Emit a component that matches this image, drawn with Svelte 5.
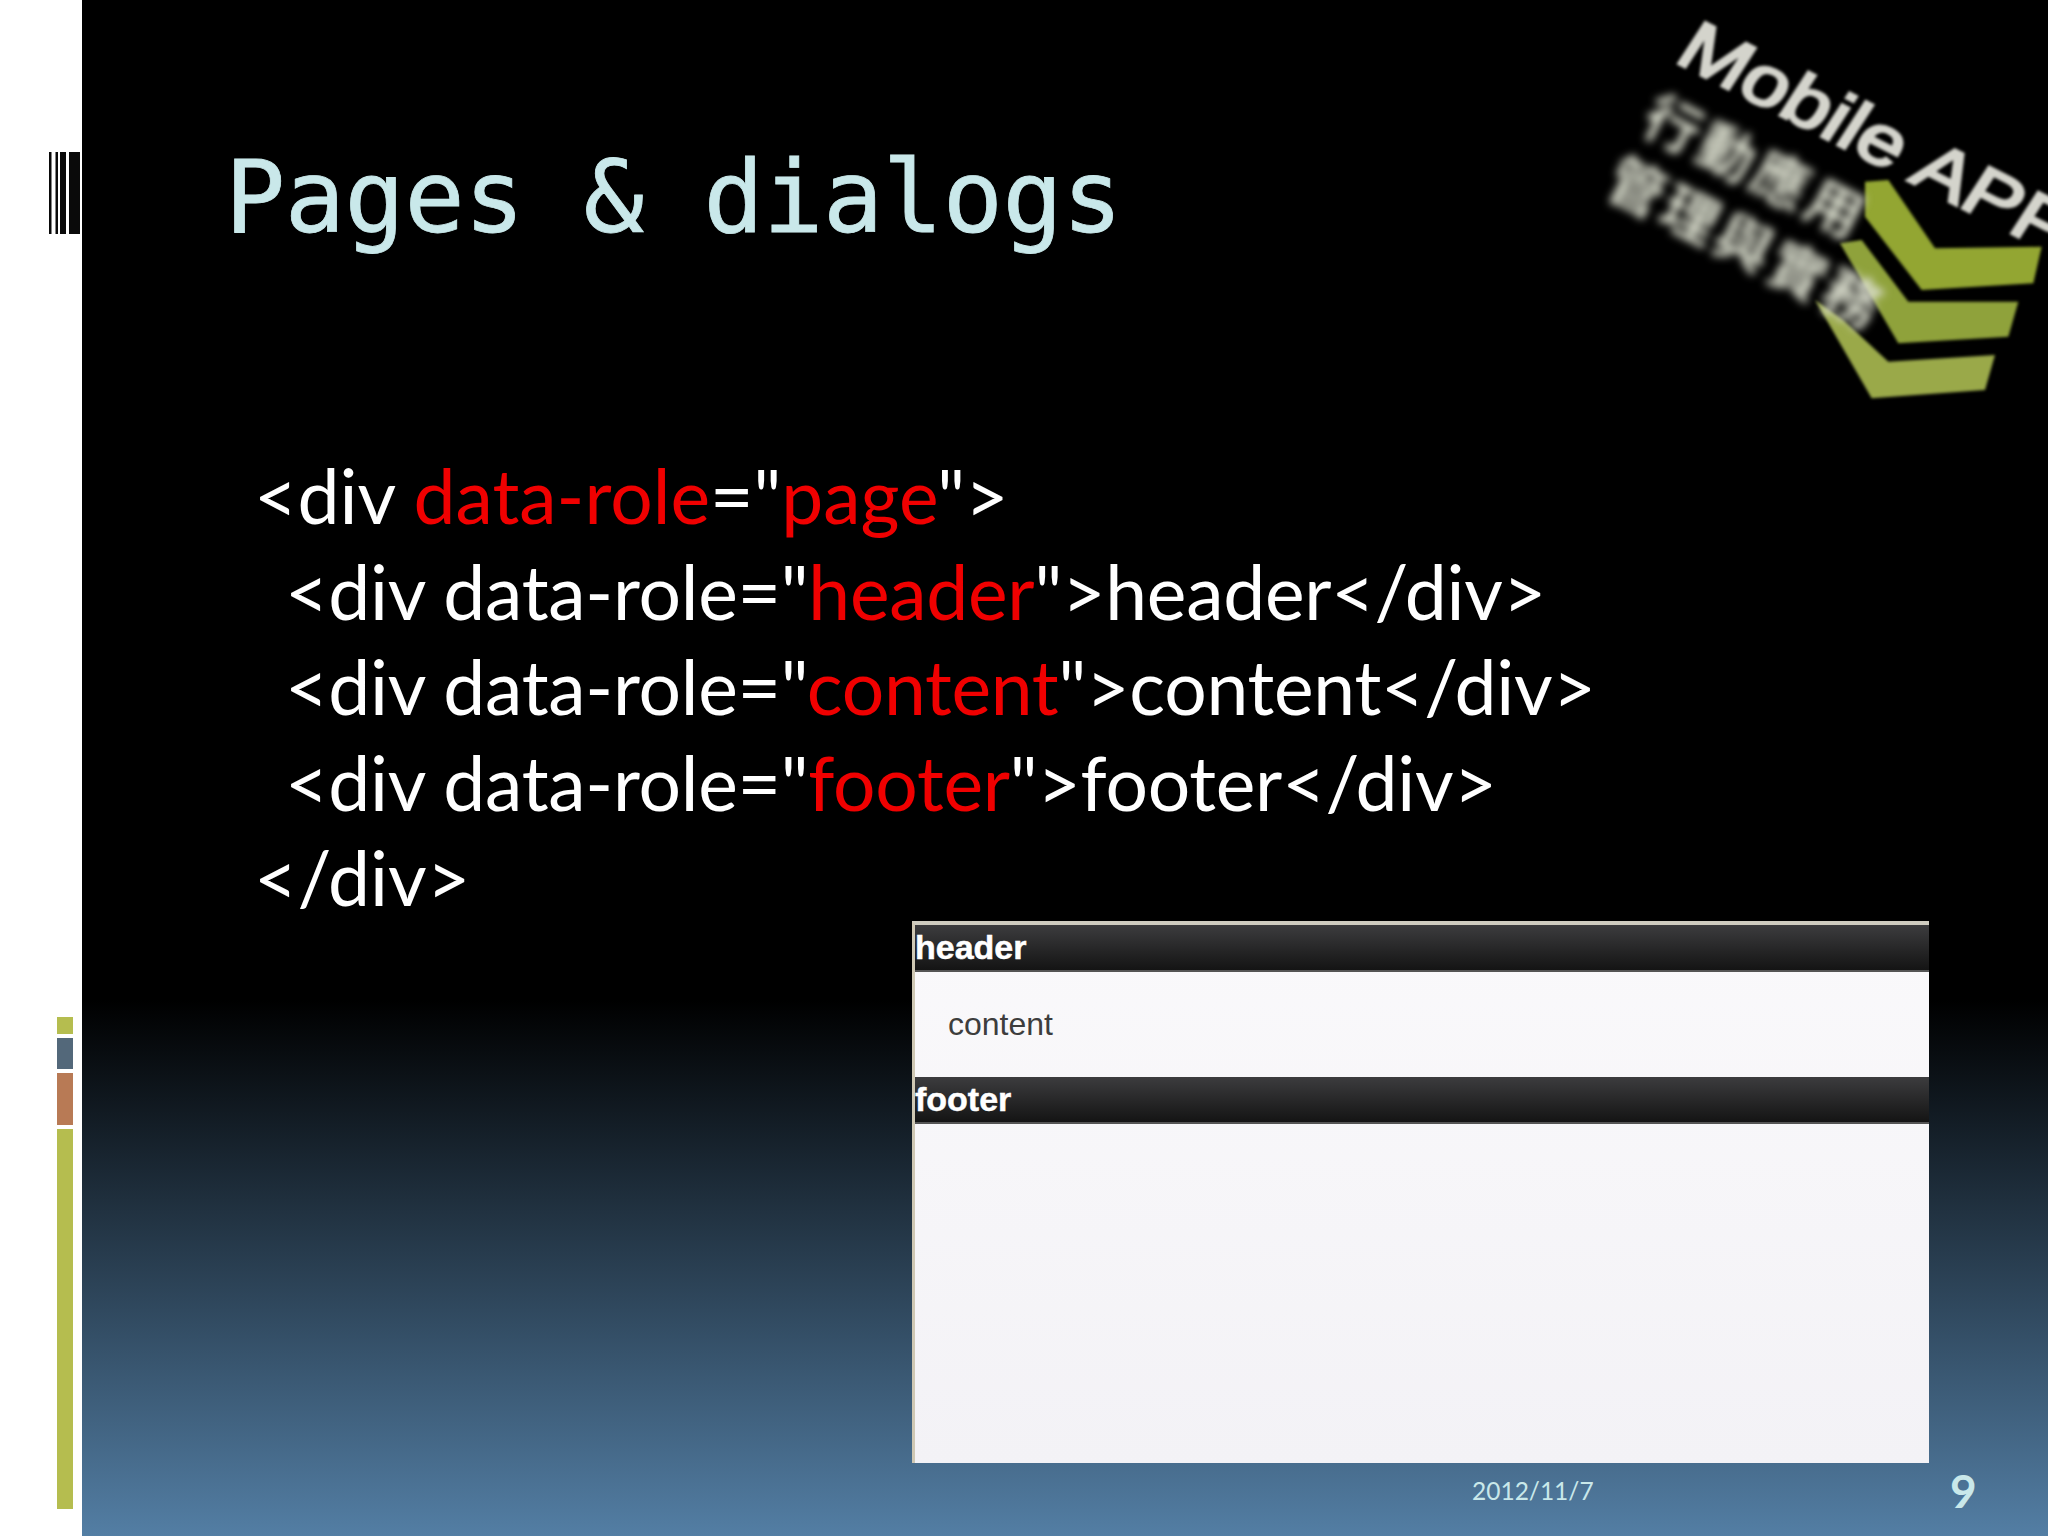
<script>
  const blocks = [
    { color: '#b5bd4f', height: 17 },
    { color: '#53687a', height: 31 },
    { color: '#b87a55', height: 52 },
    { color: '#b5bd4f', height: 380 }
  ];
  const bars = [
    { x: 0, w: 2.5 }, { x: 6.5, w: 2.5 }, { x: 11, w: 6 }, { x: 20, w: 11 }
  ];
  const roles = ['header', 'content', 'footer'];
</script>

<div class="slide">
  <aside class="rail">
    <svg class="barcode" width="31" height="82" viewBox="0 0 31 82">
      {#each bars as b}<rect x={b.x} y="0" width={b.w} height="82" fill="#0a0a0a" />{/each}
    </svg>
    <div class="blocks">
      {#each blocks as b}<span style="background:{b.color};height:{b.height}px"></span>{/each}
    </div>
  </aside>

  <main class="main">
    <h1>Pages &amp; dialogs</h1>

    <div class="code">
      <div>&lt;div <b>data-role</b>="<b>page</b>"&gt;</div>
      {#each roles as role}
        <div class="indent">&lt;div data-role="<b>{role}</b>"&gt;{role}&lt;/div&gt;</div>
      {/each}
      <div>&lt;/div&gt;</div>
    </div>

    <section class="shot">
      <div class="bar">header</div>
      <div class="content">content</div>
      <div class="bar">footer</div>
    </section>

    <footer class="foot">
      <span class="date">2012/11/7</span>
      <span class="num">9</span>
    </footer>
  </main>

  <!-- blurred logo in the corner -->
  <svg class="logo" width="488" height="420" viewBox="0 0 1464 1260">
    <defs>
      <filter id="soft"><feGaussianBlur stdDeviation="5" /></filter>
      <filter id="softer"><feGaussianBlur stdDeviation="12" /></filter>
    </defs>
    <g filter="url(#soft)" fill="#93a632">
      <path d="M915 545 L985 540 L1125 745 L1445 740 L1420 850 L1085 870 L915 650 Z" />
      <path d="M840 730 L905 720 L1045 905 L1375 905 L1345 1010 L1015 1030 Z" fill="#8fa23a" />
      <path d="M765 900 L850 960 L985 1085 L1305 1065 L1275 1170 L935 1195 Z" fill="#9aa94a" />
    </g>
    <g filter="url(#soft)">
      <text class="en" transform="translate(338 182) rotate(27) skewX(-6) scale(1.17 1)">Mobile APP</text>
    </g>
    <g filter="url(#softer)">
      <text class="zh" transform="translate(235 390) rotate(27.4)">行動應用</text>
      <text class="zh" transform="translate(125 578) rotate(27.4)">管理與實務</text>
    </g>
  </svg>
</div>

<style>
  :global(body) { margin: 0; background: #000; }
  .slide {
    position: relative;
    width: 2048px;
    height: 1536px;
    display: flex;
    overflow: hidden;
    background: linear-gradient(to bottom, #000 0, #000 1000px, #537ea4 1536px);
  }
  .rail {
    width: 82px;
    height: 1536px;
    flex: none;
    box-sizing: border-box;
    background: #fff;
    display: flex;
    flex-direction: column;
    align-items: flex-end;
    padding-top: 152px;
  }
  .barcode { margin-right: 2px; display: block; }
  .blocks {
    display: flex;
    flex-direction: column;
    gap: 4px;
    margin-top: 783px;
    margin-right: 9px;
    width: 16px;
  }
  .main {
    flex: 1;
    display: flex;
    flex-direction: column;
    min-width: 0;
  }
  h1 {
    margin: 143px 0 0 143px;
    font: 400 100px/1.1 "DejaVu Sans Mono", monospace;
    letter-spacing: -0.4px;
    -webkit-text-stroke: 0.8px #c9e8ea;
    color: #c9e8ea;
  }
  .code {
    margin: 195px 0 0 172px;
    font: 400 75px/95.5px "Lato", sans-serif;
    color: #fff;
    white-space: nowrap;
  }
  .indent { padding-left: 31px; letter-spacing: -0.25px; }
  .code b { font-weight: 400; color: #f00000; }
  .shot {
    margin: -5px 0 0 830px;
    width: 1017px;
    height: 542px;
    box-sizing: border-box;
    background: linear-gradient(#faf9fb, #f3f2f6);
    border-top: 4px solid #cfccc0;
    border-left: 3px solid #cfc8b4;
    flex: none;
  }
  .bar {
    height: 47px;
    box-sizing: border-box;
    background: linear-gradient(#3c3c3e, #141414);
    border-bottom: 2px solid #555;
    color: #fff;
    font: 700 34px/44px "Liberation Sans", sans-serif;
    -webkit-text-stroke: 0.5px #fff;
  }
  .content {
    height: 105px;
    box-sizing: border-box;
    padding: 32px 0 0 33px;
    font: 400 32px/40px "Liberation Sans", sans-serif;
    color: #3d3d3d;
  }
  .foot {
    display: flex;
    align-items: center;
    height: 56px;
    color: #c9e8ea;
    font-family: "Lato", sans-serif;
  }
  .date { margin-left: 1390px; font-size: 24.5px; width: 478px; }
  .num { font-size: 46px; font-weight: 700; }
  .logo { position: absolute; left: 1560px; top: 0; }
  .en { font: 400 213px "Liberation Sans", sans-serif; fill: #d4d4cc; stroke: #d4d4cc; stroke-width: 9px; }
  .zh { font: 700 170px "Noto Sans CJK TC", sans-serif; letter-spacing: 12px; fill: #dcdfcf; }
</style>
